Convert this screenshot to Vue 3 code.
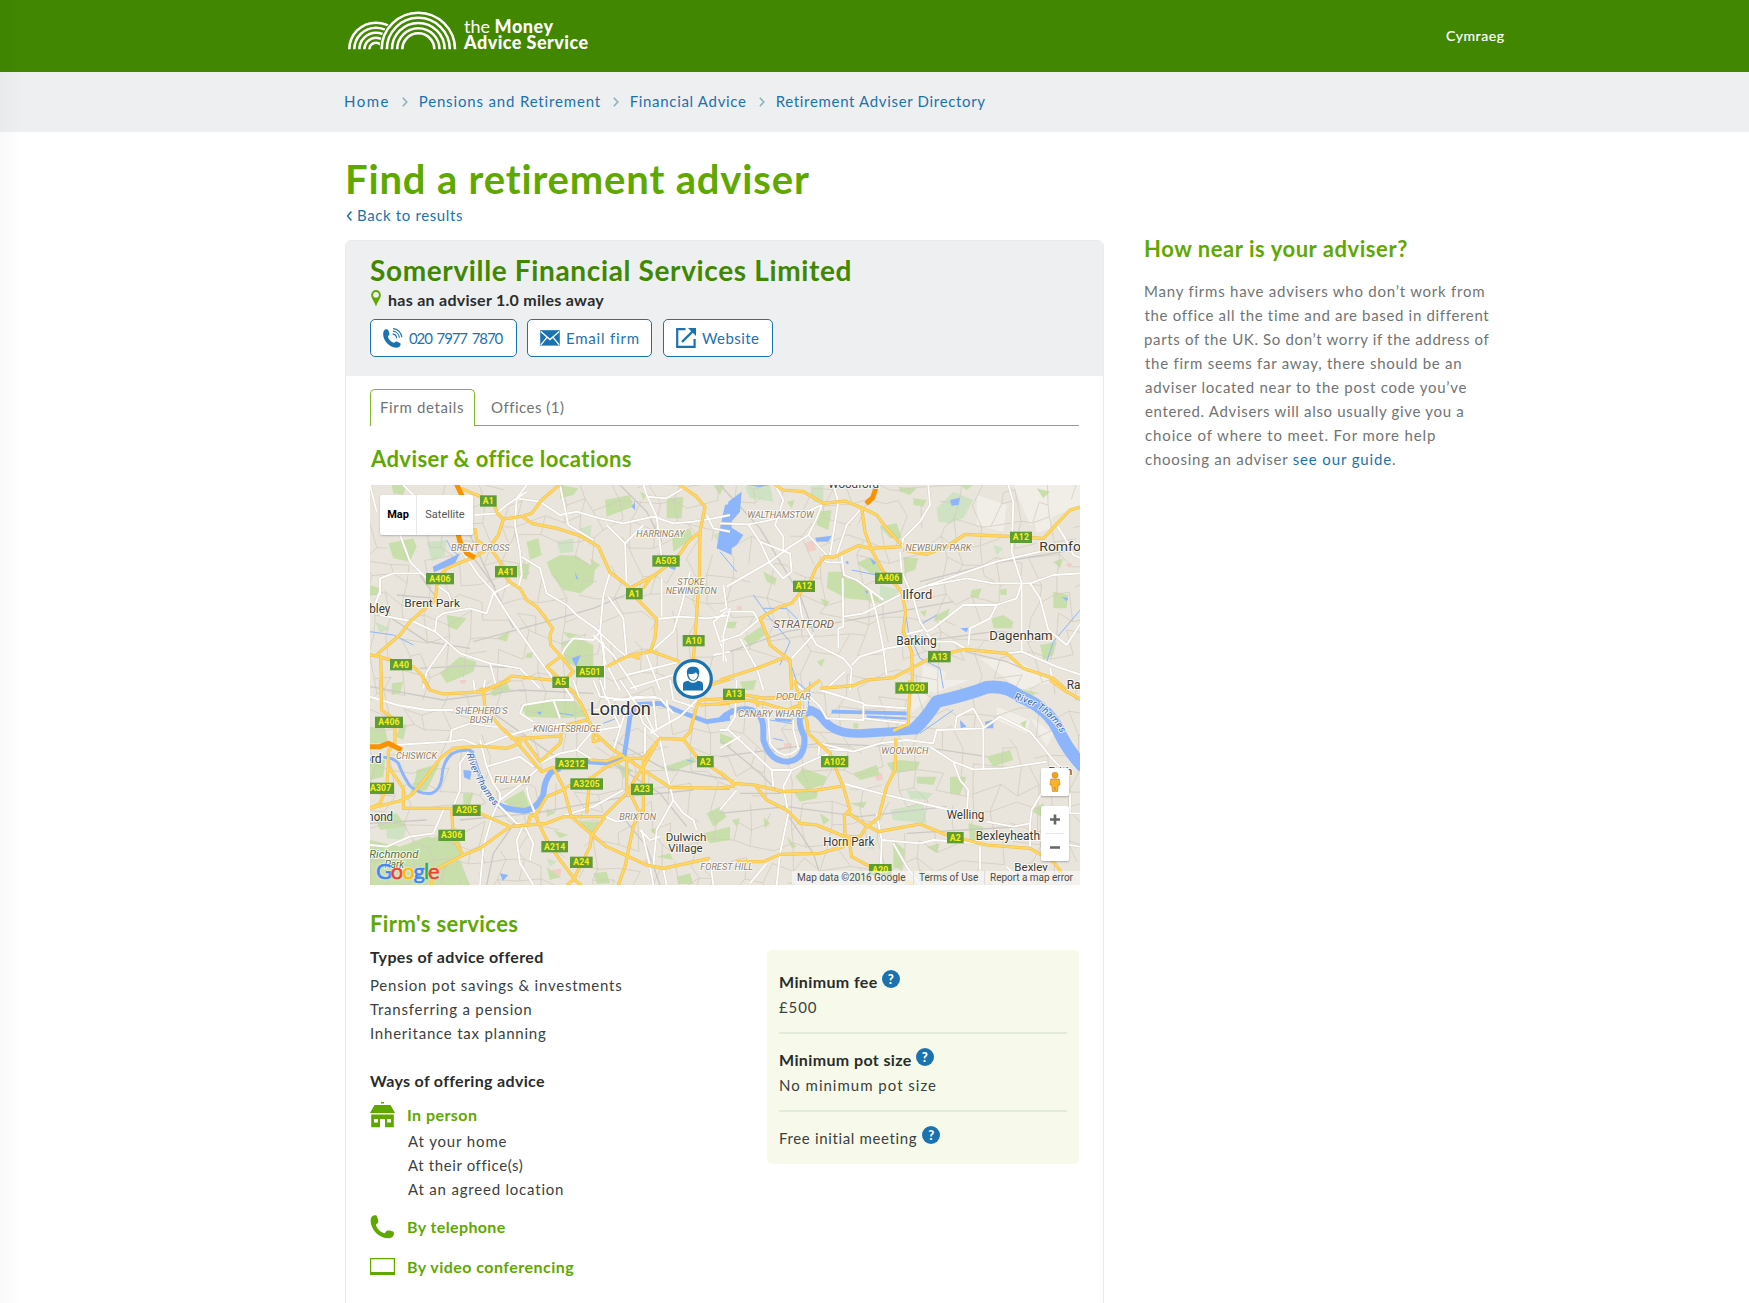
<script setup>
const crumbs = [
  { text: 'Home', cls: 'c1' },
  { text: 'Pensions and Retirement', cls: 'c2' },
  { text: 'Financial Advice', cls: 'c3' },
  { text: 'Retirement Adviser Directory', cls: 'c4' },
]

const arcs = { small: [80, 65, 50, 35, 20], big: [110, 94.5, 79, 63.5, 48] }

// The map is drawn as four tiles, three units to the pixel.
const tiles = [
  {
    id: 'nw', at: 'translate(-10 -10) scale(.33333)',
    parks: ['85 205 160 190 170 215 150 260 100 250', '600 30 655 40 640 60 600 70', '735 75 810 60 820 95 740 125', '920 70 970 65 965 130 920 130', '500 200 535 190 545 240 510 255', '560 262 600 240 650 242 705 280 700 325 660 355 610 345 575 300', '470 270 510 265 500 315 475 305', '605 500 660 490 700 510 700 575 660 580 615 560', '260 420 320 430 290 465 265 455', '240 595 300 545 350 560 340 590 260 625', '990 320 1040 325 1030 360 980 350', '690 250 720 270 700 290', '935 180 990 160 1000 190 940 230', '410 490 450 465 440 500', '30 330 60 340 50 360 30 360', '95 30 140 30 130 60 100 55', '500 535 520 530 515 550 495 548', '610 470 660 480 625 490', '1060 30 1095 28 1080 60', '840 50 860 60 850 75'],
    pale: ['660 160 695 150 690 195 665 190', '200 200 260 195 255 240 215 260', '590 200 640 190 640 230 600 235', '1060 180 1085 170 1075 200', '45 440 90 460 60 475'],
    water: ['218 275 300 235 285 265 222 292', '1095 90 1115 85 1115 240 1070 220 1080 160', '635 550 662 540 648 575', '925 270 950 262 945 285 930 280', '815 95 825 80 825 105', '645 290 655 315 648 310'],
    streams: ['M260 195 L275 225 L295 240', 'M30 470 L100 480 L160 510'],
    rail: ['M80 420 L200 500 L330 520', 'M345 255 L405 335', 'M180 580 L330 572 L440 578', 'M340 500 L560 440 L700 400 L820 350', 'M780 30 L860 110 L905 200', 'M180 300 L230 370 L110 360', 'M330 180 L460 460'],
    white: ['M500 30 L470 70 L465 150 L480 230 L485 300 L475 335', 'M345 120 L410 115 L440 90 L500 50', 'M470 70 L540 80 L600 120 L650 110 L720 130 L790 145 L880 125 L940 145 L1000 140 L1060 130 L1110 120', 'M600 30 L625 150 L700 195', 'M850 28 L860 60 L890 125 L905 250', 'M905 310 L905 425', 'M860 65 L920 70 L970 40', 'M120 180 L150 260 L200 310 L265 355 L280 400', 'M300 220 L355 300 L400 350 L450 430 L520 530 L600 640', 'M455 325 L400 355 L380 415 L330 400 L250 415 L230 430 L225 470 L260 500 L300 535 L390 565 L480 580 L540 640', 'M485 245 L540 280 L560 355 L620 390 L650 420 L720 470', 'M750 292 L730 360 L720 470 L700 495 L640 490 L615 520 L605 540', 'M720 470 L735 560 L780 645', 'M745 365 L790 430 L800 545', 'M700 455 L770 520 L800 545', 'M700 480 L760 540 L830 645', 'M730 500 L735 645', 'M890 432 L960 425 L1040 430 L1110 420', 'M875 528 L940 470 L965 390 L990 290', 'M60 360 L60 310 L100 295 L190 295', 'M60 350 L40 400', 'M60 420 L160 440 L225 470', 'M30 30 L50 110', 'M260 505 L200 590 L190 640', 'M390 565 L410 640', 'M1110 400 L1060 440 L1100 560', 'M740 150 L795 205 L800 330', 'M795 205 L850 150', 'M800 600 L960 560', 'M810 640 L940 600', 'M860 540 L900 645', 'M1060 540 L1110 530', 'M1040 120 L1060 160 L1110 170', 'M130 30 L190 90'],
    yellow: ['M305 40 L345 58 L400 80 L412 115 L430 132 L490 123 L515 115 L545 75 L600 28', 'M485 123 L515 145 L590 160 L660 182 L715 215 L750 292 L800 330 L830 370 L890 432 L885 490 L872 528', 'M430 132 L415 180 L385 222 L345 245 L320 255 L260 280 L232 310 L230 340 L225 375 L195 400 L150 440 L120 480 L60 530 L50 540', 'M30 540 L60 545 L160 575 L185 600 L210 645', 'M62 545 L65 645', 'M345 160 L350 195 L400 232 L420 260 L440 310 L455 325 L480 340 L500 375 L530 395 L550 420 L578 460 L570 480 L572 510 L600 540 L640 590 L620 610 L570 615 L455 603 L410 635 L360 645', 'M605 542 L560 575 L600 612', 'M740 575 L800 545 L872 528 L960 560', 'M812 338 L885 300 L950 250 L985 200 L1020 170 L1035 95 L1010 65 L960 30', 'M850 340 L870 310 L885 300', 'M1020 170 L1018 300 L1010 420 L1000 555', 'M1050 630 L1110 612', 'M812 540 L835 550 L825 535'],
    orange: ['M290 28 L305 60 L300 110 L290 160 L300 200 L320 235 L345 248'],
    labels: [['BRENT CROSS', 273, 227, 176, 'area'], ['HARRINGAY', 829, 186, 145, 'area'], ['STOKE', 952, 329, 82, 'area'], ['NEWINGTON', 917, 356, 153, 'area'], ['Brent Park', 133, 396, 167, 'town'], ['Wembley', -52, 414, 143, 'town big']],
    badges: [['A1', 385, 78, 50], ['A406', 240, 311, 84], ['A41', 438, 290, 66], ['A503', 918, 258, 82], ['A1', 823, 356, 50], ['A10', 1001, 497, 66], ['A40', 123, 569, 66], ['A501', 690, 590, 84], ['A5', 602, 622, 50]],
  },
  {
    id: 'ne', at: 'translate(350 -10) scale(.33333)',
    parks: ['325 290 365 290 380 310 430 325 470 360 480 380 380 370 320 340', '410 265 450 245 490 285 460 300', '480 155 530 145 545 190 510 190', '550 245 595 250 585 285 555 295', '290 110 335 105 325 165 290 150', '815 430 850 420 880 440 875 460 820 460', '755 345 785 340 775 370 750 365', '70 490 130 450 135 480 90 515', '650 420 690 400 680 430 640 440', '960 510 1010 500 1000 540 970 555', '1000 350 1045 360 1040 400 1000 400', '840 345 860 340 860 360 842 360', '535 35 590 40 570 60 540 50', '130 290 170 310 165 330 140 320', '20 440 50 440 45 460 20 460', '580 70 620 75 610 95 580 90', '290 560 315 550 305 575', '950 40 990 50 970 70', '600 410 620 405 615 425', '1000 260 1030 250 1020 280', '200 80 225 75 215 100', '300 370 330 380 315 395', '720 30 760 30 740 45'],
    pale: ['650 100 700 50 760 75 730 130 690 145 655 140', '270 35 310 30 310 85 280 80', '480 330 540 345 520 370 480 385', '75 35 150 30 160 80 90 70', '820 210 850 220 830 240'],
    bare: ['770 60 860 90 850 170 770 150', '880 30 1085 30 1085 90 1010 120 930 150', '940 110 1000 90 990 160 950 175', '610 570 680 590 660 645 600 640', '780 550 900 560 1000 620 900 645'],
    pink: ['255 205 280 195 290 225 265 230', '50 395 65 392 65 405 52 405', '1035 268 1055 265 1050 280'],
    water: ['25 80 65 50 60 110 30 145 20 130', '0 165 30 155 70 180 50 210 20 230 0 220', '690 75 720 68 715 90 695 92', '285 188 335 182 325 200 290 200', '375 260 385 258 385 270', '745 650 790 620 860 620 890 650', '450 250 470 262 460 270', '720 460 745 458 740 472', '435 345 445 350 440 356', '1025 365 1045 370 1040 378', '80 30 150 30 120 36'],
    streams: ['M0 230 L50 290', 'M100 360 L150 430 L210 500 L180 570', 'M130 400 L200 400 L240 440', 'M555 400 L565 470 L600 550 L660 580 L670 640', 'M210 560 L230 620 L260 645', 'M395 285 L470 300', 'M600 450 L650 420', 'M1085 400 L1000 500 L980 560'],
    rail: ['M0 30 L120 160 L240 360 L280 470', 'M0 540 L200 470 L420 430 L700 380', 'M600 320 L820 265 L1085 220', 'M600 500 L820 470 L1000 480', 'M735 530 L860 560 L930 590'],
    white: ['M0 145 L85 148 L130 140 L260 110 L305 90', 'M85 148 L120 200 L150 265 L190 310 L215 290 L210 235 L120 200', 'M165 30 L190 75 L165 150 L190 185 L190 225', 'M355 80 L330 240', 'M340 30 L355 80', 'M420 105 L380 150 L350 240', 'M265 180 L320 240', 'M20 335 L150 260 L210 215 L265 180 L290 130 L305 90', 'M365 240 L372 300 L410 315 L450 345 L490 375', 'M368 310 L370 455 L355 460 L355 520', 'M10 330 L20 400 L0 410', 'M20 410 L100 410 L115 435', 'M235 355 L245 420 L260 460 L290 510 L370 550 L395 580 L390 645', 'M215 550 L280 480', 'M0 500 L60 480 L115 435', 'M320 640 L375 590', 'M370 425 L430 415 L540 360 L700 305 L830 260 L960 230', 'M540 230 L545 290 L580 370 L600 440 L620 470 L640 460 L730 390 L830 390 L890 370 L905 325', 'M610 335 L740 310 L820 325 L930 325 L1000 300 L1085 295', 'M865 30 L880 80 L875 230 L905 325 L905 530 L860 535', 'M905 530 L1010 575 L1085 600', 'M930 325 L960 370 L985 465 L1040 510 L1085 440', 'M1010 150 L1035 190 L1060 240 L1085 250', 'M625 30 L630 90 L600 140 L550 190 L545 215', 'M450 345 L470 420 L490 520 L500 600', 'M60 490 L110 580 L130 645', 'M395 570 L420 545 L500 520 L560 510', 'M550 480 L610 465', 'M830 390 L810 430 L750 460 L745 510', 'M620 475 L640 500 L700 500 L735 520', 'M305 255 L325 262 L365 262', 'M30 400 L10 480 L10 560', 'M990 580 L1000 620'],
    yellow: ['M165 30 L190 45 L250 50 L310 85 L375 78 L425 98 L470 120 L500 160 L545 210', 'M425 98 L435 170 L455 225 L490 290 L545 350 L557 410 L550 470 L575 530 L578 645', 'M545 215 L450 220 L415 212 L340 247 L315 245 L290 275 L270 320 L240 355 L215 385 L180 395 L120 430 L145 490 L150 510 L210 555 L215 645', 'M550 225 L620 238 L680 215 L735 178 L880 185 L970 190 L1050 105 L1085 95', 'M0 615 L110 580 L200 545', 'M300 640 L400 632 L440 615 L520 608 L578 578 L640 545 L735 523 L860 535 L910 580 L1000 610 L1040 645'],
    orange: ['M468 38 L458 68 L438 86'],
    labels: [['Woodford', 325, 38, 152, 'town'], ['WALTHAMSTOW', 82, 128, 200, 'area'], ['NEWBURY PARK', 556, 227, 198, 'area'], ['Romford', 958, 229, 162, 'town large'], ['Ilford', 547, 371, 90, 'town big'], ['STRATFORD', 160, 460, 182, 'area strong'], ['Barking', 529, 510, 121, 'town big'], ['Dagenham', 808, 496, 190, 'town big']],
    badges: [['A12', 903, 187, 66], ['A406', 506, 310, 82], ['A12', 252, 334, 66], ['A13', 658, 545, 68]],
  },
  {
    id: 'sw', at: 'translate(-10 195) scale(.33333)',
    parks: ['480 75 580 55 650 65 680 110 600 115 500 110', '30 140 75 145 85 190 30 190', '45 415 110 400 140 440 60 450', '30 480 120 500 200 470 300 485 310 525 240 560 215 615 30 615', '310 340 340 340 330 375 310 375', '390 35 440 5 450 30 400 50', '430 365 490 330 510 380 460 385', '660 425 715 425 695 460', '170 270 240 250 200 330 150 340 165 300', '900 265 1000 230 1010 245 940 275', '1040 400 1080 380 1100 410 1060 440', '580 450 625 465 600 475', '890 530 930 520 940 540', '770 250 820 270 790 295', '220 570 300 540 330 615 220 615', '95 10 130 5 120 40 95 45', '30 240 75 240 70 290 30 300', '1030 460 1110 440 1110 480 1050 490', '560 560 600 590 570 600', '700 580 740 575 750 610 710 612', '950 590 990 580 1000 612 955 612', '870 450 900 440 890 470', '560 385 585 400 560 410', '120 130 140 135 130 180 110 170'],
    pale: ['220 470 275 450 300 485 240 500', '140 520 210 520 200 600 150 600', '80 440 140 440 130 480 80 475', '560 535 590 545 570 560'],
    pink: ['575 570 605 565 600 595 580 590', '300 0 320 0 315 12 302 10', '850 540 870 535 865 555'],
    water: ['310 270 335 272 330 300 312 292', '420 580 445 585 428 603', '530 95 545 95 540 106'],
    streams: ['M590 98 L640 106', 'M730 130 L770 115', 'M980 240 L1000 245'],
    river: [['M70 232 Q100 232 115 250 Q130 290 150 318 Q180 345 215 340 Q242 330 246 290 Q248 245 275 222 Q300 208 335 212', 9], ['M335 212 L350 260 L375 330 L410 372', 11], ['M405 370 Q440 390 490 392 Q530 390 550 345 Q552 300 575 275 L600 265', 18], ['M590 262 L680 245 L750 250 L792 230 L800 180 L810 110 L830 75', 14], ['M825 74 L900 70 L960 95 L1040 125 L1110 115', 14]],
    rail: ['M30 20 L250 60 L480 30 L700 40', 'M300 420 L520 400 L800 350 L1000 330', 'M760 180 L900 260 L1110 300', 'M740 240 L900 340 L980 440', 'M30 430 L200 420', 'M470 420 L400 520 L380 615', 'M780 400 L860 500 L900 615', 'M400 100 L600 240'],
    white: ['M30 50 L110 75 L200 90 L280 90', 'M375 0 L370 35', 'M340 0 L345 35', 'M270 185 L275 150 L330 130 L400 140', 'M105 195 L270 185 L310 178 L360 200', 'M360 180 L380 260 L400 310 L420 340 L420 360 L400 400 L370 500 L360 615', 'M420 360 L480 315 L540 260', 'M325 215 L300 250 L300 330 L280 380', 'M30 495 L80 500 L150 470 L220 460 L250 390', 'M500 320 L505 350 L525 400', 'M410 370 L470 430 L490 435', 'M490 435 L470 480 L480 550 L520 615', 'M495 440 L520 490 L510 540', 'M360 200 L450 165 L540 140 L620 130', 'M380 260 L480 230 L520 260', 'M490 75 L480 100 L520 125', 'M490 75 L580 60 L640 60 L600 0', 'M580 60 L600 115', 'M640 0 L660 60', 'M700 0 L720 50 L790 60 L830 50 L900 55 L940 100', 'M830 80 L850 130 L900 175', 'M780 0 L820 60 L860 110 L880 150', 'M740 50 L760 100 L780 140 L720 150', 'M855 140 L855 230', 'M870 160 L960 110 L1010 60', 'M900 180 L920 280 L940 360 L890 450 L880 560', 'M940 360 L970 400 L1000 420 L1010 450', 'M840 450 L870 480 L900 470', 'M845 450 L870 560 L880 615', 'M540 250 L600 220 L650 210 L700 150', 'M650 210 L700 240', 'M690 120 L700 180', 'M600 410 L700 380 L790 330', 'M735 410 L770 425 L850 410', 'M910 565 L920 615', 'M720 0 L740 60', 'M760 60 L830 55 L890 50', 'M810 50 L760 210', 'M880 60 L890 150', 'M920 60 L930 130', 'M700 90 L800 80', 'M400 140 L420 140', 'M1050 540 L1060 615', 'M930 0 L940 60 L1000 80'],
    yellow: ['M62 0 L65 90 L105 120 L105 185 L85 215 L85 260 L130 325 L130 385 L270 385', 'M30 385 L60 370 L80 320 L85 260', 'M30 385 L130 360 L160 340 L200 290 L240 235 L280 205 L360 198 L440 205 L480 190 L480 175 L600 168 L620 135 L680 120', 'M190 0 L210 30 L250 42 L370 35 L410 15 L450 0', 'M370 35 L375 80 L420 140 L470 185 L545 275 L580 262 L610 320 L635 415', 'M450 175 L490 175 L540 245 L600 190 L605 170', 'M600 0 L640 35 L665 75 L685 120 L710 165 L760 210 L800 235', 'M700 160 L700 185 L720 180', 'M270 385 L360 400 L450 440 L560 430 L610 410 L730 410 L800 340 L800 235', 'M275 385 L280 475 L310 525 L360 505 L450 440', 'M215 615 L215 575 L310 525', 'M690 240 L740 243 L790 225', 'M505 430 L510 410 L530 400 L560 350 L620 325', 'M525 405 L560 480 L600 540 L650 605 L665 615', 'M620 320 L685 300 L740 260 L800 235 L850 235 L900 175 L970 178 L990 155 L1010 80 L1020 60', 'M800 235 L850 270 L930 322 L1110 325', 'M850 235 L850 400', 'M835 390 L805 330 L850 260 L890 190', 'M735 410 L695 465 L690 500 L640 600 L620 615', 'M640 415 L680 450 L740 500 L860 555 L910 565 L1050 535', 'M840 390 L820 440 L795 560 L775 615', 'M970 178 L1010 230 L1110 300', 'M690 290 L680 400', 'M1020 60 L1110 55', 'M1110 70 L1020 75'],
    orange: ['M30 200 L60 200 L85 190 L125 210'],
    labels: [["SHEPHERD'S", 286, 101, 157, 'area'], ['BUSH', 329, 129, 70, 'area'], ['KNIGHTSBRIDGE', 519, 156, 203, 'area'], ['London', 689, 105, 184, 'city'], ['CHISWICK', 108, 236, 123, 'area'], ['FULHAM', 403, 308, 107, 'area'], ['BRIXTON', 778, 419, 110, 'area'], ['Dulwich', 917, 483, 122, 'town'], ['Village', 925, 516, 103, 'town'], ['FOREST HILL', 1021, 570, 158, 'area'], ['Brentford', -86, 248, 151, 'town big'], ['Richmond', -56, 422, 155, 'town big'], ['Richmond', 28, 533, 147, 'green'], ['Park', 74, 564, 58, 'green']],
    curve: 'M320 222 Q338 300 402 378',
    badges: [['A406', 87, 127, 84], ['A307', 62, 325, 80], ['A3212', 635, 251, 98], ['A3205', 680, 312, 98], ['A23', 846, 328, 66], ['A205', 320, 391, 84], ['A306', 275, 466, 80], ['A214', 584, 500, 80], ['A24', 664, 547, 68], ['A2', 1036, 245, 50]],
  },
  {
    id: 'se', at: 'translate(350 195) scale(.33333)',
    parks: ['225 290 250 265 320 290 310 315 260 330', '220 335 295 330 290 355 240 365', '500 250 540 240 600 245 590 270 520 280', '400 280 470 255 480 285 420 300', '690 290 740 290 720 345 690 340', '520 480 555 510 545 570 520 560', '800 230 870 210 880 240 820 260', '590 290 650 290 640 315 590 310', '745 430 790 440 790 480 750 480', '390 370 440 365 430 385', '620 500 660 490 650 520', '400 130 415 130 415 145 400 145', '130 410 150 430 135 445', '600 570 660 590 640 612 600 600', '930 390 970 370 980 420', '0 160 40 175 30 200 0 190', '900 130 920 120 915 145', '395 580 430 575 440 610 400 612', '300 400 330 420 310 435', '60 5 110 0 100 30 70 30', '35 420 60 415 50 440', '200 470 230 500 215 505', '870 20 960 40 900 50'],
    pale: ['510 390 610 370 620 430 520 420', '560 330 640 340 620 360 570 355', '430 490 470 490 460 510'],
    bare: ['560 20 640 10 620 60 560 110', '830 80 930 120 920 160 830 120', '930 110 1000 160 980 200', '600 0 750 0 640 40'],
    pink: ['465 285 485 278 490 300 470 302', '190 190 215 190 215 205 195 205'],
    water: ['795 125 818 120 820 145 798 145', '720 120 740 140 722 145'],
    streams: ['M150 120 L222 132', 'M600 160 L700 90', 'M160 175 L190 182', 'M270 5 L265 75'],
    river: [['M0 122 Q30 85 80 88 Q130 92 130 150 L130 180 Q150 246 205 245 Q258 235 253 170 Q235 130 240 110 L275 95', 18], ['M262 88 Q295 95 315 125 Q350 165 430 160 L590 150', 26], ['M580 150 Q615 120 650 65 Q740 45 800 22 Q860 15 900 50 Q990 85 1022 165 Q1050 220 1090 260', 38], ['M335 95 L560 100', 11], ['M440 110 L560 116', 7], ['M165 118 L215 122', 8]],
    rail: ['M0 180 L120 280 L180 340 L60 340', 'M0 230 L300 190 L520 200', 'M0 400 L200 380 L420 410 L680 380', 'M200 400 L280 520 L310 615', 'M600 200 L800 230', 'M560 460 L900 440'],
    white: ['M20 145 L70 190 L155 270 L215 270 L290 235 L330 220', 'M0 205 L60 170', 'M50 0 L45 110 L20 150 L0 150', 'M155 270 L160 320', 'M215 270 L190 320 L205 400 L180 520 L170 615', 'M145 115 L150 190 Q190 250 235 205 L220 150 L220 120', 'M215 0 L270 50 L300 80 L320 115 L430 120 L430 70 L300 30', 'M430 75 L560 85', 'M430 115 L560 130', 'M300 190 L400 215 L480 190 L560 180 L640 190 L650 150 L790 145 L840 110 L930 155 L1000 240 L1020 260', 'M300 185 L295 225', 'M330 208 L390 212', 'M705 145 L710 110 L760 85 L790 140 L790 270', 'M630 200 L700 245 L720 300 L745 330 L740 400', 'M700 245 L760 268 L850 265 L980 245', 'M375 312 L480 340 L690 390', 'M470 400 L485 480 L480 615', 'M485 480 L600 490 L640 480 L780 490', 'M800 425 L880 440 L930 430 L935 390 L965 340', 'M930 430 L930 500', 'M780 500 L780 570', 'M520 490 L560 560 L600 615', 'M1050 340 L1050 400 L1085 400', 'M0 390 L50 330', 'M950 480 L1080 500', 'M860 560 L900 600', 'M90 610 L140 550'],
    yellow: ['M0 70 L80 60 L130 70 L200 90 L240 75 L225 0', 'M75 45 L135 55 L230 50 L300 0', 'M105 55 L115 80', 'M235 80 L260 120 L265 160 L330 220 L345 260 L370 320 L390 390 L373 405 L375 465', 'M0 275 L40 310 L105 315 L190 335 L290 330 L370 318', 'M35 298 L40 318 L0 325', 'M105 315 L140 360 L200 390 L240 430 L290 435 L375 470 L420 470 L440 440 L475 415 L500 320 L525 270 L528 175', 'M520 152 L565 132 L570 0', 'M380 395 L430 430 L475 455 L600 432 L680 465 L800 495 L930 505 L1000 545 L1030 585', 'M50 545 L130 545 L180 523 L300 520 L370 500 L385 465', 'M385 465 L395 530 L450 560 L500 580 L580 612', 'M990 0 L1040 35 L1085 60'],
    orange: [],
    labels: [['POPLAR', 168, 61, 104, 'area'], ['CANARY WHARF', 54, 110, 203, 'area'], ['WOOLWICH', 484, 221, 141, 'area'], ['Erith', 985, 284, 72, 'town'], ['Welling', 680, 417, 113, 'town big'], ['Horn Park', 310, 498, 153, 'town big'], ['Bexleyheath', 767, 481, 193, 'town big'], ['Bexley', 883, 573, 100, 'town'], ['Rainham', 1040, 27, 140, 'town big']],
    curve: 'M882 58 Q985 85 1022 160',
    badges: [['A13', 42, 43, 66], ['A1020', 575, 24, 98], ['A102', 344, 245, 82], ['A2', 706, 473, 50], ['A20', 481, 569, 68]],
  },
]

// Side streets: a jittered lattice, with some of its edges left out.
function sideStreets() {
  let seed = 11
  const rnd = () => (seed = (seed * 16807) % 2147483647) / 2147483647
  const cols = 38, rows = 22, pts = []
  for (let r = 0; r <= rows; r++) {
    pts.push([])
    for (let c = 0; c <= cols; c++) {
      pts[r].push([(c * 19 + (rnd() - 0.5) * 15).toFixed(1), (r * 19 + (rnd() - 0.5) * 15).toFixed(1)])
    }
  }
  let d = ''
  for (let r = 0; r < rows; r++) {
    for (let c = 0; c < cols; c++) {
      if (rnd() > 0.42) d += `M${pts[r][c]}L${pts[r][c + 1]}`
      if (rnd() > 0.42) d += `M${pts[r][c]}L${pts[r + 1][c]}`
    }
  }
  return d
}
const streets = sideStreets()
</script>

<template>
  <div class="page">
    <header class="top">
      <div class="wrap top-in">
        <a class="logo">
          <svg class="hills" width="109" height="40" viewBox="24 32 327 120">
            <g fill="none" stroke="#fff" stroke-width="7.6">
              <path v-for="r in arcs.small" :key="r" :d="`M${108 - r} 150 A${r} ${r} 0 0 1 ${108 + r} 150`" />
              <circle cx="235" cy="150" r="117" fill="#418702" stroke="none" />
              <path v-for="r in arcs.big" :key="r" :d="`M${235 - r} 150 A${r} ${r} 0 0 1 ${235 + r} 150`" />
            </g>
          </svg>
          <span class="brand"><span class="brand-1">the <b>Money</b></span><b class="brand-2">Advice Service</b></span>
        </a>
        <a class="lang">Cymraeg</a>
      </div>
    </header>

    <nav class="crumbs">
      <ol class="wrap">
        <li v-for="(c, i) in crumbs" :key="c.text" :class="c.cls">
          <svg v-if="i" width="6" height="10" viewBox="0 0 6 10"><path d="M.8 .8 L4.8 5 L.8 9.2" fill="none" stroke="#8fb0bd" stroke-width="1.6" /></svg>
          <a>{{ c.text }}</a>
        </li>
      </ol>
    </nav>

    <main class="wrap main">
      <div class="primary">
        <h1>Find a retirement adviser</h1>
        <a class="back"><svg width="7" height="10" viewBox="0 0 7 10"><path d="M5.4 .5 L1.6 5 L5.4 9.5" fill="none" stroke="#1b72b0" stroke-width="1.5" /></svg>Back to results</a>

        <article class="card">
          <div class="card-head">
            <h2>Somerville Financial Services Limited</h2>
            <p class="miles">
              <svg width="10" height="17" viewBox="0 0 10 17"><path fill="#5fa800" fill-rule="evenodd" d="M5 0 A4.8 4.8 0 0 1 9.8 4.9 C9.8 8 6.6 11.5 5 16.5 C3.4 11.5 .2 8 .2 4.9 A4.8 4.8 0 0 1 5 0Z M5 1.9 A2.9 2.9 0 1 0 5 7.7 A2.9 2.9 0 1 0 5 1.9Z" /></svg>
              <span>has an adviser 1.0 miles away</span>
            </p>
            <div class="actions">
              <a class="btn b1">
                <svg width="20" height="20" viewBox="0 0 20 20">
                  <path fill="#1b72b0" d="M1 2.6 C2 1.2 4.6 .8 5.2 2 L6.4 5.6 C6.7 6.7 5.2 7.5 4.9 8.4 C5.6 11.4 8 13.9 10.9 14.7 C11.9 14.6 12.6 13.2 13.8 13.5 L17 15 C18.2 15.8 17.4 18 16 19 C12.6 21.2 6.6 18.6 3.4 14.6 C.4 11 -.8 5.4 1 2.6Z" />
                  <g fill="none" stroke="#1b72b0" stroke-width="1.2"><path d="M9.6 5.8 A4.6 4.6 0 0 1 13.6 10.2" /><path d="M9.9 3.2 A7.2 7.2 0 0 1 16.4 9.8" /><path d="M10.1 .7 A9.6 9.6 0 0 1 18.9 9.3" /></g>
                </svg>
                <span>020 7977 7870</span>
              </a>
              <a class="btn b2">
                <svg width="20" height="20" viewBox="0 0 20 20">
                  <rect x=".2" y="2.2" width="19.6" height="15.4" fill="#1b72b0" />
                  <path d="M.8 3.4 L10 11.6 L19.2 3.4 M.8 16.9 L7 9.4 M19.2 16.9 L13 9.4" fill="none" stroke="#fff" stroke-width="1.3" />
                </svg>
                <span>Email firm</span>
              </a>
              <a class="btn b3">
                <svg width="20" height="20" viewBox="0 0 20 20" fill="none" stroke="#1b72b0" stroke-width="2.2">
                  <path d="M9.5 1.2 H1.2 V18.8 H18.6 V11" /><path d="M6 14 L17.5 2.5" stroke-width="2.4" /><path d="M12 0 H20 V8 Z" fill="#1b72b0" stroke="none" />
                </svg>
                <span>Website</span>
              </a>
            </div>
          </div>

          <div class="card-body">
            <div class="tabs"><a class="tab on">Firm details</a><a class="tab off">Offices (1)</a></div>

            <h3 class="h-loc">Adviser &amp; office locations</h3>

            <div class="map">
              <svg width="710" height="400" viewBox="0 0 710 400" class="canvas">
                <rect width="710" height="400" fill="#e9e5dc" />
                <g v-for="t in tiles" :key="t.id" :transform="t.at">
                  <polygon v-for="p in t.bare" :key="p" :points="p" fill="#f1eee8" />
                  <polygon v-for="p in t.pale" :key="p" :points="p" class="pale" />
                  <polygon v-for="p in t.pink" :key="p" :points="p" class="pink" />
                  <polygon v-for="p in t.parks" :key="p" :points="p" class="park" />
                </g>
                <path :d="streets" class="street" />
                <g v-for="t in tiles" :key="t.id" :transform="t.at" class="lines">
                  <path v-for="p in t.rail" :key="p" :d="p" class="rail" />
                  <polygon v-for="p in t.water" :key="p" :points="p" class="water" />
                  <path v-for="p in t.streams" :key="p" :d="p" class="stream" />
                  <path v-for="p in t.river" :key="p[0]" :d="p[0]" :stroke-width="p[1]" class="river" />
                </g>
                <g v-for="t in tiles" :key="t.id" :transform="t.at" class="lines">
                  <path v-for="p in t.white" :key="p" :d="p" class="w-case" />
                  <path v-for="p in t.white" :key="p" :d="p" class="w-road" />
                </g>
                <g v-for="t in tiles" :key="t.id" :transform="t.at" class="lines">
                  <path v-for="p in t.yellow" :key="p" :d="p" class="y-case" />
                  <path v-for="p in t.yellow" :key="p" :d="p" class="y-road" />
                  <path v-for="p in t.orange" :key="p" :d="p" class="o-road" />
                </g>
                <g v-for="t in tiles" :key="t.id" :transform="t.at">
                  <g v-for="b in t.badges" :key="b.join()">
                    <rect :x="b[1] - b[3] / 2" :y="b[2] - 17" :width="b[3]" height="34" fill="#609c35" />
                    <text :x="b[1]" :y="b[2] + 9" class="badge" text-anchor="middle">{{ b[0] }}</text>
                  </g>
                  <text v-for="l in t.labels" :key="l.join()" :x="l[1]" :y="l[2]" :textLength="l[3]" lengthAdjust="spacingAndGlyphs" :class="['label', l[4]]">{{ l[0] }}</text>
                  <template v-if="t.curve">
                    <path :id="'curve-' + t.id" :d="t.curve" fill="none" />
                    <text class="label thames"><textPath :href="'#curve-' + t.id">River Thames</textPath></text>
                  </template>
                </g>
              </svg>

              <svg class="marker" width="42" height="42" viewBox="-21 -21 42 42">
                <circle r="18.3" fill="#fff" stroke="#1b72b0" stroke-width="3.2" />
                <path fill="#1b72b0" d="M-10 11.5 V5.5 C-10 3 -7.5 2 -4.5 1.7 C-2.5 4.5 2.5 4.5 4.5 1.7 C7.5 2 10 3 10 5.5 V11.5Z" />
                <path fill="#1b72b0" d="M-6 -5 C-7 -11 -3 -12.5 0 -12.2 C4 -12.5 7.5 -10 6 -4.5 C5.5 0 3 1.8 0 1.8 C-3 1.8 -5.5 0 -6 -5Z" />
                <path fill="#fff" d="M-4.6 -5.2 C-1 -4.6 2 -5.2 3 -7 C3.4 -5.6 4.3 -5 4.8 -4.6 C4.4 -1.5 2.5 1 0 1 C-2.5 1 -4.4 -1.5 -4.6 -5.2Z" />
              </svg>

              <div class="kind"><span class="kind-on">Map</span><span class="kind-off">Satellite</span></div>
              <div class="peg">
                <svg width="12" height="20" viewBox="0 0 12 20"><circle cx="6" cy="3.2" r="3" fill="#f2a31b" stroke="#c8780f" stroke-width=".5" /><path d="M1.8 7 H10.2 L11 13 H9.3 L8.5 19.5 H6.5 L6 15 L5.5 19.5 H3.5 L2.7 13 H1 Z" fill="#fbb22d" stroke="#c8780f" stroke-width=".6" /></svg>
              </div>
              <div class="zoom">
                <svg width="28" height="55" viewBox="0 0 28 55"><path d="M9 13.5 H19 M14 8.5 V18.5 M9 41.5 H19" stroke="#666" stroke-width="2.6" /><path d="M5 27.5 H23" stroke="#e6e6e6" /></svg>
              </div>
              <div class="google"><i class="gb">G</i><i class="gr">o</i><i class="gy">o</i><i class="gb">g</i><i class="gg">l</i><i class="gr">e</i></div>
              <div class="attrib"><span class="a1">Map data ©2016 Google</span><span class="a2">Terms of Use</span><span class="a3">Report a map error</span></div>
            </div>

            <h3 class="h-serv">Firm's services</h3>
            <div class="cols">
              <div class="left">
                <h4 class="t1">Types of advice offered</h4>
                <ul class="types"><li class="s1">Pension pot savings &amp; investments</li><li>Transferring a pension</li><li>Inheritance tax planning</li></ul>
                <h4 class="t2">Ways of offering advice</h4>
                <div class="way w1">
                  <svg width="25" height="26" viewBox="0 0 25 26"><path fill="#5fa800" fill-rule="evenodd" d="M11 0 h3 v1.5 h-3z M4.5 3 H20.5 L24.8 10.5 V11 H.2 V10.5Z M1.2 12.5 H23.8 V25.2 H15 V17 H10 V25.2 H1.2Z M4 17 V20.5 H8 V17Z M17 17 V20.5 H21 V17Z" /></svg>
                  <strong>In person</strong>
                </div>
                <ul class="places"><li class="p1">At your home</li><li class="p2">At their office(s)</li><li class="p3">At an agreed location</li></ul>
                <div class="way w2">
                  <svg width="25" height="24" viewBox="0 0 25 24"><path fill="#5fa800" d="M1.5 2 C3 .2 6.4 -.3 7 1.2 C7.4 3 8.6 5.8 8.2 7.2 C7.8 8.4 5.8 9 6 10.2 C7 13.8 10.6 17.2 14.2 18.2 C15.6 18.4 15.6 16.4 17.2 15.6 C18.8 15.2 22.4 16 23.4 16.8 C24.6 18.4 23.8 21 22 22.2 C17.5 24.8 9.5 22 5.2 17 C1 12.5 -.5 5.5 1.5 2Z" /></svg>
                  <strong>By telephone</strong>
                </div>
                <div class="way w3">
                  <svg width="25" height="17" viewBox="0 0 25 17"><path fill="#5fa800" fill-rule="evenodd" d="M0 0 H25 V17 H0Z M1.2 1.2 V14 H23.8 V1.2Z" /></svg>
                  <strong>By video conferencing</strong>
                </div>
              </div>

              <aside class="fees">
                <div class="fee f1"><div class="fee-h"><h4>Minimum fee</h4><i class="q">?</i></div><p>£500</p></div>
                <div class="fee f2"><div class="fee-h"><h4>Minimum pot size</h4><i class="q">?</i></div><p>No minimum pot size</p></div>
                <div class="fee f3"><div class="fee-h"><span>Free initial meeting</span><i class="q">?</i></div></div>
              </aside>
            </div>
          </div>
        </article>
      </div>

      <section class="side">
        <h3>How near is your adviser?</h3>
        <p>
          <span>Many firms have advisers who don’t work from</span>
          <span>the office all the time and are based in different</span>
          <span>parts of the UK. So don’t worry if the address of</span>
          <span>the firm seems far away, there should be an</span>
          <span>adviser located near to the post code you’ve</span>
          <span>entered. Advisers will also usually give you a</span>
          <span>choice of where to meet. For more help</span>
          <span>choosing an adviser <a>see our guide</a>.</span>
        </p>
      </section>
    </main>
    <div class="edge"></div>
  </div>
</template>

<style>
body { margin: 0; background: #fff; }
</style>

<style scoped>
.page { position: relative; height: 1303px; overflow: hidden; font: 400 15px/24px Lato, "Open Sans", sans-serif; letter-spacing: .74px; color: #3c3f3f; background: #fff; }
h1, h2, h3, h4, p, ul, ol { margin: 0; padding: 0; list-style: none; }
svg { display: block; flex: none; }
i { font-style: normal; }
.wrap { width: 1160px; margin-left: 345px; }
.edge { position: absolute; left: 0; top: 0; width: 22px; height: 100%; background: linear-gradient(90deg, rgba(0,0,0,.025), rgba(0,0,0,0)); }

.top { height: 72px; background: #418702; }
.top-in { display: flex; justify-content: space-between; }
.logo { display: flex; padding: 10px 0 0 3px; }
.brand { display: flex; flex-direction: column; margin: 8px 0 0 7px; color: #fff; font-size: 18px; line-height: 16px; white-space: nowrap; }
.brand b { font-weight: 900; letter-spacing: .5px; }
.brand-1 { letter-spacing: 0; }
.brand .brand-2 { letter-spacing: .45px; }
.lang { padding: 24px 1px 0 0; color: #fff; font-size: 14px; letter-spacing: .6px; margin-right: -.6px; -webkit-text-stroke: .2px #fff; }

.crumbs { height: 60px; background: #edeff0; }
.crumbs ol { display: flex; padding-top: 17px; }
.crumbs li { display: flex; align-items: center; color: #1b72b0; white-space: nowrap; }
.crumbs li svg { margin: 2px 11px 0 12px; }
.c1 { letter-spacing: 1.5px; margin-left: -1px; }
.c2 { letter-spacing: .84px; }
.c3 { letter-spacing: .69px; }
.c4 { letter-spacing: .67px; }
.c1 a { margin-right: -.3px; }
.c3 { margin-left: -.4px; }

.main { display: flex; }
.primary { width: 759px; flex: none; }
h1 { position: relative; top: 2px; margin: 20px 0 0 0; font-size: 40px; line-height: 50px; letter-spacing: .83px; color: #5fa800; }
.back { display: flex; align-items: center; margin-top: 1px; color: #1b72b0; letter-spacing: .63px; }
.back svg { margin: 2px 4px 0 1px; }

.card { margin-top: 13px; height: 1100px; border: 1px solid #e9ebec; border-radius: 6px 6px 0 0; overflow: hidden; box-sizing: border-box; }
.card-head { height: 124px; background: #edeff0; padding: 11px 24px 0; }
h2 { font-size: 28px; line-height: 36px; letter-spacing: .64px; color: #418702; white-space: nowrap; }
.miles { display: flex; height: 24px; font-weight: 700; font-size: 16px; letter-spacing: .27px; color: #2a2c2c; }
.miles svg { margin: 2px 7px 0 1px; }
.actions { display: flex; margin-top: 7px; }
.btn { display: flex; align-items: center; box-sizing: border-box; height: 38px; padding-left: 12px; border: 1px solid #1b72b0; border-radius: 5px; background: #fff; color: #1b72b0; white-space: nowrap; }
.btn svg { margin-right: 6px; }
.b1 { width: 147px; }
.b1 span { letter-spacing: -1.1px; word-spacing: 2px; }
.b2 { width: 125px; margin-left: 10px; letter-spacing: .79px; }
.b3 { width: 110px; margin-left: 11px; letter-spacing: .42px; }

.card-body { padding: 13px 24px 0; }
.tabs { display: flex; height: 37px; }
.tab { box-sizing: border-box; height: 37px; line-height: 35px; color: #717474; white-space: nowrap; }
.on { width: 105px; padding-left: 9px; border: 1px solid #7dbb23; border-bottom: 0; border-radius: 5px 5px 0 0; letter-spacing: .64px; }
.off { flex: 1; padding: 1px 0 0 16px; border-bottom: 1px solid #7dbb23; letter-spacing: .5px; }
h3 { font-size: 22px; line-height: 30px; color: #5fa800; font-weight: 700; }
.h-loc { margin: 18px 0 0 1px; letter-spacing: .42px; }
.map { position: relative; width: 710px; height: 400px; margin-top: 11px; overflow: hidden; letter-spacing: 0; }
.h-serv { margin: 24px 0 0; letter-spacing: .4px; }

.pale { fill: #cfe3c4; }
.pink { fill: #f1cfc9; }
.park { fill: #c9dfab; }
.street { fill: none; stroke: #d0c9bc; stroke-width: .7; }
.lines { fill: none; stroke-linejoin: round; }
.rail { stroke: #cbc9c6; stroke-width: 4; }
.water { fill: #8cb5fb; }
.stream { stroke: #8cb5fb; stroke-width: 3; }
.river { stroke: #8cb5fb; }
.w-case { stroke: #d6cfc2; stroke-width: 8; }
.w-road { stroke: #fff; stroke-width: 5.5; }
.y-case { stroke: #eebe50; stroke-width: 9.5; }
.y-road { stroke: #ffd65e; stroke-width: 6.5; }
.o-road { stroke: #f99100; stroke-width: 15; }
.badge { font: 700 26px Roboto, sans-serif; fill: #f7ef1d; letter-spacing: .6px; }
.label { font-family: Roboto, sans-serif; paint-order: stroke; stroke: rgba(255,255,255,.75); stroke-width: 6px; stroke-linejoin: round; }
.area { font-size: 25.5px; font-style: italic; fill: #8d806a; }
.area.strong { font-size: 31px; fill: #70644f; }
.town { font-size: 35px; fill: #3c382f; }
.big { font-size: 37px; }
.large { font-size: 40px; }
.city { font-size: 53px; fill: #33302a; font-weight: 400; }
.green { font-size: 31px; font-style: italic; fill: #55704a; }
.thames { font-size: 29px; font-style: italic; fill: #3e62a5; letter-spacing: .8px; }

.marker { position: absolute; left: 302px; top: 173px; }
.kind { position: absolute; left: 10px; top: 10px; width: 93px; height: 40px; display: flex; background: #fff; border-radius: 2px; box-shadow: 0 1px 2px rgba(0,0,0,.22); font: 11px/39px Roboto, sans-serif; color: #565656; }
.kind-on { width: 36px; text-align: center; font-weight: 700; color: #000; border-right: 1px solid #e8e8e8; }
.kind-off { flex: 1; text-align: center; }
.peg, .zoom { position: absolute; left: 671px; width: 28px; background: #fff; border-radius: 2px; box-shadow: 0 1px 2px rgba(0,0,0,.25); }
.peg { top: 283px; height: 28px; display: flex; justify-content: center; align-items: center; }
.zoom { top: 321px; height: 55px; }
.google { position: absolute; left: 6px; top: 373px; font: 400 22px/26px Lato, sans-serif; letter-spacing: -1.1px; -webkit-text-stroke: .7px; text-shadow: 0 0 2px #fff, 0 0 2px #fff; white-space: nowrap; }
.gb { color: #4285f4; } .gr { color: #ea4335; } .gy { color: #fbbc05; } .gg { color: #34a853; }
.attrib { position: absolute; left: 422px; right: 0; top: 386px; height: 14px; display: flex; background: rgba(245,245,245,.75); font: 10px/14px Roboto, sans-serif; color: #4c4c4c; white-space: nowrap; }
.attrib span { box-sizing: border-box; padding-left: 5px; }
.a1 { width: 121px; letter-spacing: -.02px; }
.a2 { width: 71px; border-left: 1px solid #ddd; letter-spacing: 0; }
.a3 { border-left: 1px solid #ddd; letter-spacing: -.03px; }

.cols { display: flex; justify-content: space-between; margin-top: 6px; }
.left { width: 380px; }
h4 { font-size: 16px; line-height: 24px; font-weight: 700; color: #2a2c2c; }
.t1 { letter-spacing: .36px; }
.t2 { margin-top: 24px; letter-spacing: .33px; }
.types { margin-top: 4px; letter-spacing: .78px; }
.s1 { letter-spacing: .76px; }
.way { display: flex; height: 24px; color: #5fa800; }
.way strong { font-size: 16px; margin-left: 12px; letter-spacing: .46px; }
.w1 { margin-top: 10px; }
.w1 svg { margin-top: -1px; }
.w2 { margin-top: 14px; }
.w2 strong { letter-spacing: .38px; }
.w3 { margin-top: 16px; }
.w3 svg { margin-top: 3px; }
.places { margin: 2px 0 0 38px; }
.p1 { letter-spacing: .86px; } .p2 { letter-spacing: .61px; } .p3 { letter-spacing: .8px; }

.fees { width: 312px; height: 214px; margin: 5px 0 0; padding: 0 12px; box-sizing: border-box; border-radius: 5px; background: #f7faea; }
.fee { box-sizing: border-box; height: 78px; border-bottom: 2px solid #e2ecd6; }
.f1 { height: 84px; padding-top: 19px; }
.f2 { padding-top: 13px; }
.f3 { border: 0; padding-top: 13px; }
.fee-h { display: flex; height: 24px; }
.fee-h h4 { letter-spacing: .38px; padding-top: 1px; }
.fee-h span { letter-spacing: .65px; margin-top: 1px; }
.fee p { margin-top: 2px; letter-spacing: .9px; }
.fee + .fee p { letter-spacing: 1px; }
.q { width: 18px; height: 18px; margin: 1px 0 0 4px; border-radius: 50%; background: #1b72b0; color: #fff; font: 900 13px/18px Lato, sans-serif; text-align: center; letter-spacing: 0; }
.f3 .q { margin-left: 5px; }

.side { margin: 102px 0 0 40px; color: #717474; white-space: nowrap; }
.side h3 { letter-spacing: .55px; }
.side p { margin: 15px 0 0 1px; }
.side span { display: block; }
.side a { color: #1b72b0; letter-spacing: .86px; }
.side span:nth-child(1) { margin-left: -1px; letter-spacing: .77px; }
.side span:nth-child(2) { letter-spacing: .67px; margin-left: -.5px; }
.side span:nth-child(3) { letter-spacing: .65px; margin-left: -1px; }
.side span:nth-child(6) { letter-spacing: .67px; }
.side span:nth-child(7) { letter-spacing: .87px; }
</style>
